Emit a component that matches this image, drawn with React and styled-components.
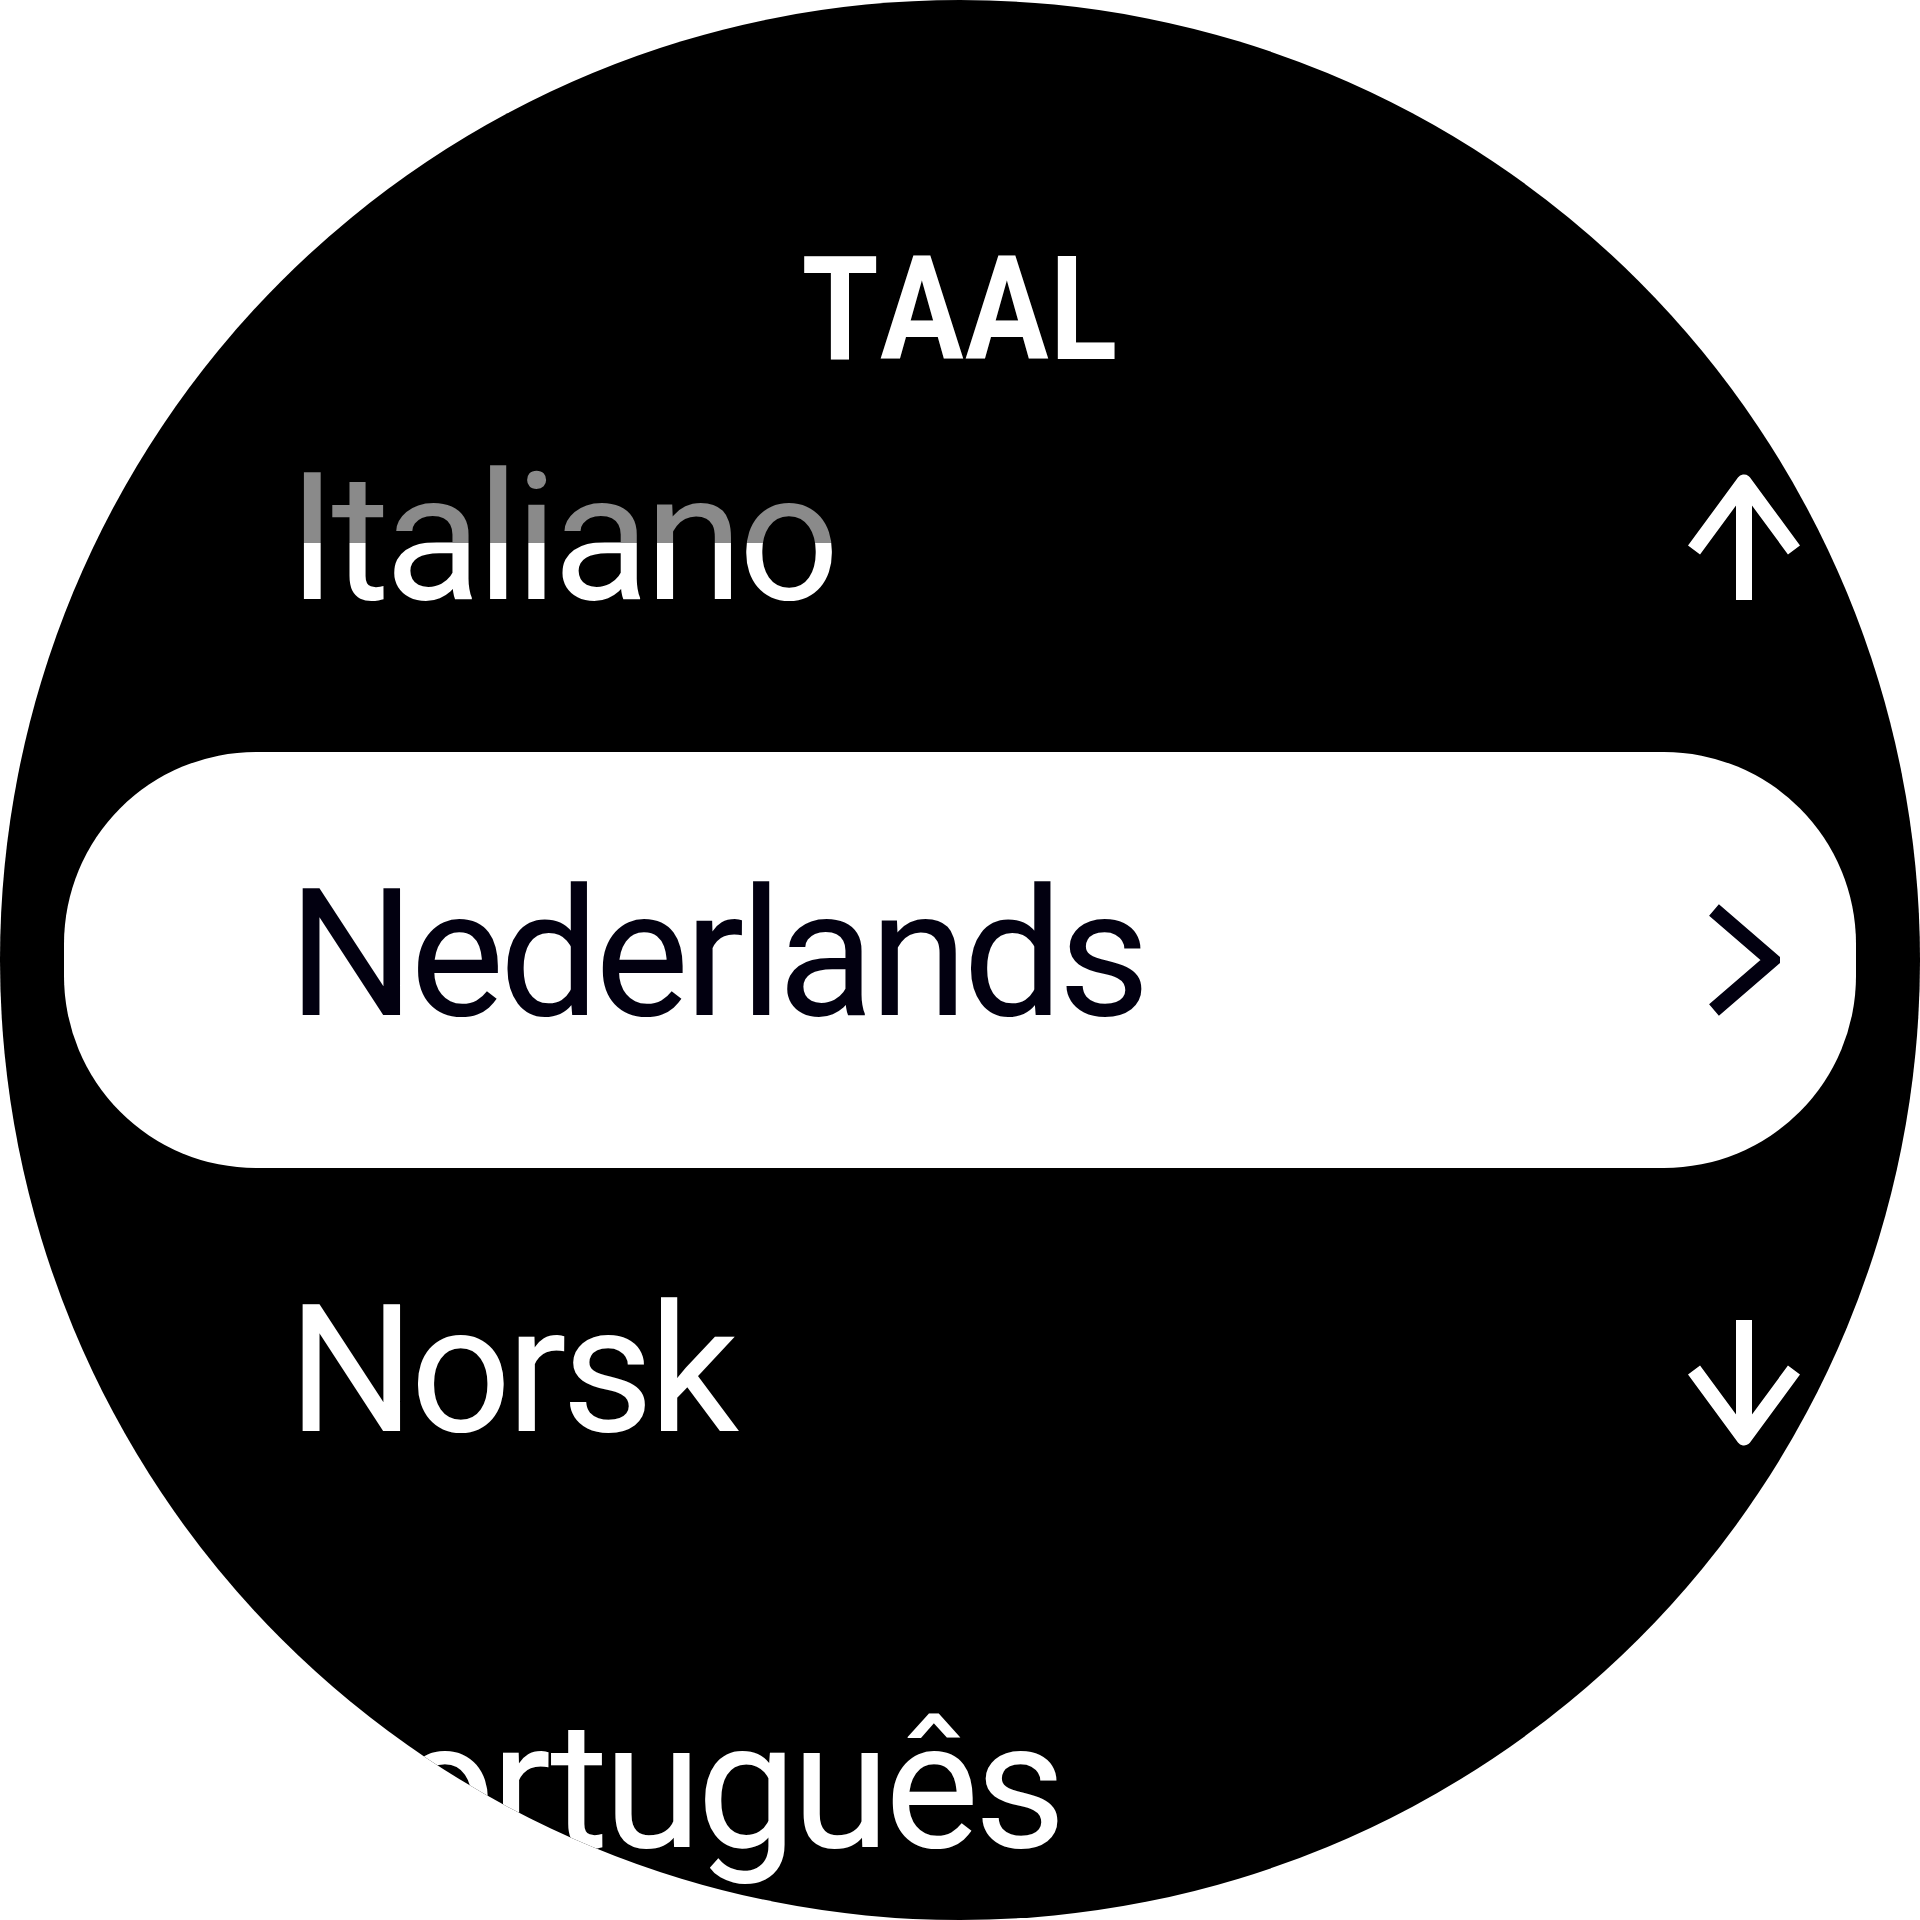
import React from "react";
import styled, { createGlobalStyle } from "styled-components";

const GlobalStyle = createGlobalStyle`
  html, body {
    margin: 0;
    padding: 0;
    background: #ffffff;
  }
  #root {
    width: 1920px;
    height: 1920px;
  }
`;

const Watch = styled.div`
  width: 1920px;
  height: 1920px;
  border-radius: 50%;
  background: #000000;
  overflow: hidden;
  display: flex;
  flex-direction: column;
  font-family: Roboto, "Liberation Sans", sans-serif;
`;

const Header = styled.div`
  height: 336px;
  flex: none;
  box-sizing: border-box;
  padding-top: 238px;
  display: flex;
  justify-content: center;
  align-items: flex-start;
`;

const Title = styled.div`
  font-size: 144px;
  line-height: 1;
  font-weight: 700;
  color: #ffffff;
  letter-spacing: 2px;
  font-kerning: none;
  transform: scaleX(0.86);
  transform-origin: center;
`;

const List = styled.div`
  display: flex;
  flex-direction: column;
`;

const Row = styled.div`
  flex: none;
  height: 416px;
  margin: 0 64px;
  box-sizing: border-box;
  padding: 0 56px 0 224px;
  display: flex;
  align-items: center;
  justify-content: space-between;
  border-radius: 192px;
  background: ${(p) => (p.$selected ? "#ffffff" : "transparent")};
`;

const Label = styled.span`
  font-size: 178px;
  line-height: 1;
  font-weight: 400;
  letter-spacing: -5px;
  white-space: nowrap;
  margin-bottom: 12px;
  color: ${(p) => (p.$selected ? "#020010" : "#ffffff")};
  ${(p) =>
    p.$faded &&
    `
    background: linear-gradient(to bottom, #8a8a8a 0%, #8a8a8a 53%, #ffffff 53%, #ffffff 100%);
    -webkit-background-clip: text;
    background-clip: text;
    color: transparent;
  `}
`;

const IconBox = styled.div`
  width: 112px;
  height: 128px;
  flex: none;
  display: flex;
  align-items: center;
  justify-content: center;
  margin-top: ${(p) => (p.$shift > 0 ? p.$shift * 2 : 0)}px;
  margin-bottom: ${(p) => (p.$shift < 0 ? -p.$shift * 2 : 0)}px;
`;

const ArrowUp = () => (
  <svg width="112" height="128" viewBox="0 0 112 128">
    <path d="M6 78 L56 10 L106 78" fill="none" stroke="#fff" strokeWidth="15" strokeLinejoin="round" />
    <path d="M56 12 V128" fill="none" stroke="#fff" strokeWidth="16" />
  </svg>
);

const ArrowDown = () => (
  <svg width="112" height="128" viewBox="0 0 112 128">
    <path d="M6 50 L56 118 L106 50" fill="none" stroke="#fff" strokeWidth="15" strokeLinejoin="round" />
    <path d="M56 0 V116" fill="none" stroke="#fff" strokeWidth="16" />
  </svg>
);

const Chevron = () => (
  <svg width="72" height="112" viewBox="0 0 72 112">
    <path d="M6 6 L64 56 L6 106" fill="none" stroke="#020010" strokeWidth="15" />
  </svg>
);

const rows = [
  { name: "Italiano", faded: true, icon: <ArrowUp />, shift: -8 },
  { name: "Nederlands", selected: true, icon: <Chevron />, shift: 0 },
  { name: "Norsk", icon: <ArrowDown />, shift: 8 },
  { name: "Português" },
];

export default function App() {
  return (
    <>
      <GlobalStyle />
      <Watch>
        <Header>
          <Title>TAAL</Title>
        </Header>
        <List>
          {rows.map((r) => (
            <Row key={r.name} $selected={r.selected}>
              <Label $selected={r.selected} $faded={r.faded}>
                {r.name}
              </Label>
              {r.icon && <IconBox $shift={r.shift}>{r.icon}</IconBox>}
            </Row>
          ))}
        </List>
      </Watch>
    </>
  );
}
